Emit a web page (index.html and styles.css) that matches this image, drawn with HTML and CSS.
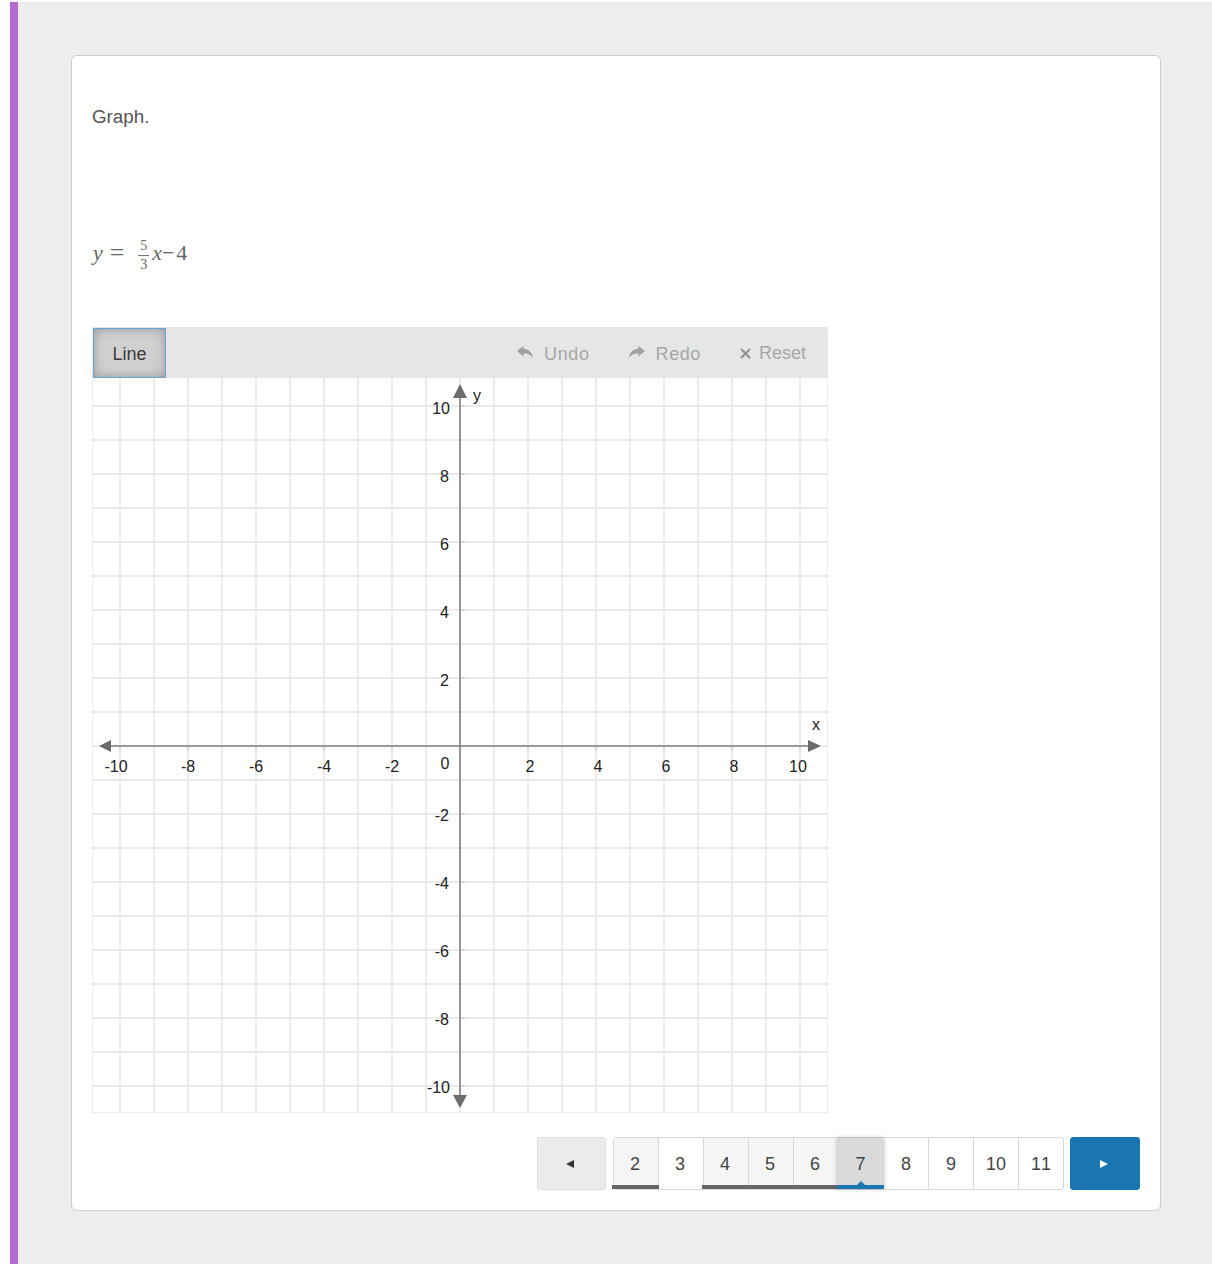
FILE: index.html
```html
<!DOCTYPE html>
<html lang="en">
<head>
<meta charset="utf-8">
<title>Graph</title>
<link rel="stylesheet" href="styles.css">
</head>
<body>
<main class="stage">
  <section class="card">
    <p class="prompt">Graph.</p>
    <div class="math">
      <i>y</i><span class="eq">=</span>
      <span class="frac"><span class="num">5</span><span class="den">3</span></span>
      <i>x</i><span class="minus">−</span><span>4</span>
    </div>
    <div class="graph">
      <div class="toolbar">
        <button class="tool-line">Line</button>
        <div class="actions">
          <span class="action">
            <svg class="arrow" width="16" height="12" viewBox="0 0 16 12"><path d="M6.5 0 0 5 6.5 10.5V7.5C10 7 13 8.5 16 11.5 15 6.5 12 3.2 6.5 2.8Z"/></svg>
            Undo
          </span>
          <span class="action">
            <svg class="arrow" width="16" height="12" viewBox="0 0 16 12"><path d="M9.5 0 16 5 9.5 10.5V7.5C6 7 3 8.5 0 11.5 1 6.5 4 3.2 9.5 2.8Z"/></svg>
            Redo
          </span>
          <span class="action action-reset">
            <svg class="cross" width="11" height="11" viewBox="0 0 11 11"><path d="M1 1 10 10M10 1 1 10"/></svg>
            Reset
          </span>
        </div>
      </div>
      <svg class="plot" width="736" height="735" viewBox="0 0 736 735">
        <path class="grid" d="M28 0V735M62 0V735M96 0V735M130 0V735M164 0V735M198 0V735M232 0V735M266 0V735M300 0V735M334 0V735M368 0V735M402 0V735M436 0V735M470 0V735M504 0V735M538 0V735M572 0V735M606 0V735M640 0V735M674 0V735M708 0V735"/>
        <path class="grid" d="M0 28H736M0 62H736M0 96H736M0 130H736M0 164H736M0 198H736M0 232H736M0 266H736M0 300H736M0 334H736M0 368H736M0 402H736M0 436H736M0 470H736M0 504H736M0 538H736M0 572H736M0 606H736M0 640H736M0 674H736M0 708H736"/>
        <path class="edge" d="M0.5 0V734.5H735.5V0"/>
        <path class="tick" d="M28 368v5M96 368v5M164 368v5M232 368v5M300 368v5M436 368v5M504 368v5M572 368v5M640 368v5M708 368v5M368 28h5M368 96h5M368 164h5M368 232h5M368 300h5M368 436h5M368 504h5M368 572h5M368 640h5M368 708h5"/>
        <path class="axis" d="M16 368H718M368 16V720"/>
        <path class="head" d="M7 368 19 362V374ZM729 368 716 362V374ZM368 6 361 20H375ZM368 730 361 717H375Z"/>
        <g class="labels">
          <text x="24" y="393.5" text-anchor="middle">-10</text>
          <text x="96" y="393.5" text-anchor="middle">-8</text>
          <text x="164" y="393.5" text-anchor="middle">-6</text>
          <text x="232" y="393.5" text-anchor="middle">-4</text>
          <text x="300" y="393.5" text-anchor="middle">-2</text>
          <text x="353" y="390.5" text-anchor="middle">0</text>
          <text x="438" y="393.5" text-anchor="middle">2</text>
          <text x="506" y="393.5" text-anchor="middle">4</text>
          <text x="574" y="393.5" text-anchor="middle">6</text>
          <text x="642" y="393.5" text-anchor="middle">8</text>
          <text x="706" y="393.5" text-anchor="middle">10</text>
          <text x="358" y="35.5" text-anchor="end">10</text>
          <text x="357" y="103.5" text-anchor="end">8</text>
          <text x="357" y="171.5" text-anchor="end">6</text>
          <text x="357" y="239.5" text-anchor="end">4</text>
          <text x="357" y="307.5" text-anchor="end">2</text>
          <text x="357" y="442.5" text-anchor="end">-2</text>
          <text x="357" y="510.5" text-anchor="end">-4</text>
          <text x="357" y="578.5" text-anchor="end">-6</text>
          <text x="357" y="646.5" text-anchor="end">-8</text>
          <text x="358" y="714.5" text-anchor="end">-10</text>
          <text x="385" y="22.5" text-anchor="middle">y</text>
          <text x="724" y="352" text-anchor="middle">x</text>
        </g>
      </svg>
    </div>
    <nav class="pager">
      <button class="nav nav-prev"><svg width="8" height="8" viewBox="0 0 8 8"><path d="M0 4 8 0V8Z"/></svg></button>
      <div class="pages">
        <span class="page seen done">2</span>
        <span class="page">3</span>
        <span class="page seen done">4</span>
        <span class="page seen done">5</span>
        <span class="page seen done">6</span>
        <span class="page current">7</span>
        <span class="page">8</span>
        <span class="page">9</span>
        <span class="page">10</span>
        <span class="page">11</span>
      </div>
      <button class="nav nav-next"><svg width="8" height="8" viewBox="0 0 8 8"><path d="M8 4 0 0V8Z"/></svg></button>
    </nav>
  </section>
</main>
</body>
</html>
```
FILE: styles.css
```css
* { box-sizing: border-box; }
html, body { margin: 0; background: #fff; }
body {
  height: 1280px;
  padding: 2px 0 0 10px;
  font-family: "Liberation Sans", Arial, sans-serif;
  color: #555;
}
.stage {
  height: 1262px;
  background: #ededed;
  border-left: 8px solid #b56bcd;
  padding: 53px 51px 0 53px;
}
.card {
  height: 1156px;
  background: #fff;
  border: 1px solid #ccc;
  border-radius: 6px;
  padding: 50px 20px 0;
}
.prompt {
  margin: 0;
  height: 21px;
  font-size: 18.8px;
  line-height: 21px;
}
.math {
  display: flex;
  align-items: center;
  margin-top: 98px;
  height: 56px;
  padding-left: 1px;
  font-family: "Liberation Serif", "Times New Roman", serif;
  font-size: 22px;
  color: #666;
}
.math i { font-style: italic; }
.eq { margin: 0 13.7px 0 7px; font-size: 26px; }
.frac {
  display: flex;
  flex-direction: column;
  align-items: center;
  width: 11px;
  margin: 3px 3px 0 0;
  font-size: 14px;
  line-height: 15px;
}
.num { border-bottom: 1px solid #777; width: 100%; padding-bottom: 2px; text-align: center; }
.den { padding-top: 1px; }
.minus { margin: 0 2px 0 0; }

.graph {
  width: 736px;
  margin-top: 46px;
}
.toolbar {
  display: flex;
  justify-content: space-between;
  align-items: stretch;
  height: 51px;
  background: #e6e6e6;
  border-radius: 3px 3px 0 0;
  padding: 1px 22px 0 1px;
}
.tool-line {
  width: 73px;
  height: 50px;
  padding: 2px 0 0;
  font: 18px "Liberation Sans", Arial, sans-serif;
  color: #3a3a3a;
  background: #d0d0d0;
  border: 0;
  box-shadow: inset 0 0 0 1px #6aa5da, inset 0 0 12px #8c8c8c;
}
.actions {
  display: flex;
  align-items: center;
  gap: 39px;
}
.action {
  display: flex;
  align-items: center;
  gap: 11px;
  margin-top: 2px;
  font-size: 18px;
  letter-spacing: 0.6px;
  color: #a6a6a6;
}
.action-reset { gap: 8px; margin-top: 0; letter-spacing: 0; }
.arrow { margin-top: -4px; fill: #a0a0a0; }
.cross { fill: none; stroke: #8f8f8f; stroke-width: 2; }

.plot { display: block; }
.grid { fill: none; stroke: #e4e4e4; stroke-width: 1.4; }
.edge { fill: none; stroke: #ececec; stroke-width: 1; }
.tick { fill: none; stroke: #cfcfcf; stroke-width: 1.5; }
.axis { fill: none; stroke: #808080; stroke-width: 1.6; }
.head { fill: #6b6b6b; }
.labels text { font-size: 16px; fill: #222; }

.pager {
  display: flex;
  justify-content: flex-end;
  margin-top: 24px;
  height: 53px;
}
.nav {
  height: 53px;
  padding: 0 3px 0 0;
  border-radius: 3px;
  display: flex;
  align-items: center;
  justify-content: center;
}
.nav-prev { width: 69px; background: #ebebeb; border: 1px solid #ddd; fill: #333; }
.nav-next { width: 70px; background: #1a75b1; border: 1px solid #1a75b1; fill: #fff; }
.pages {
  display: flex;
  height: 53px;
  margin: 0 6px 0 7px;
  border: 1px solid #d8d8d8;
  border-radius: 3px;
  background: #fff;
}
.page {
  position: relative;
  width: 45px;
  display: flex;
  align-items: center;
  justify-content: center;
  padding: 2px 2px 0 0;
  font-size: 18px;
  font-kerning: none;
  color: #444;
  border-right: 1px solid #d8d8d8;
}
.current ~ .page { padding-right: 0; }
.page:last-child { border-right: 0; width: 44px; }
.seen { background: #f5f5f5; }
.done::after {
  content: "";
  position: absolute;
  left: -2px;
  right: -1px;
  bottom: 0;
  height: 4px;
  background: #666;
}
.current {
  width: 47px;
  margin-left: -2px;
  padding-right: 0;
  background: #d9d9d9;
  border-right: 0;
  box-shadow: 0 0 4px rgba(0, 0, 0, .25);
  z-index: 1;
}
.current::after {
  content: "";
  position: absolute;
  left: 0;
  right: 0;
  bottom: 0;
  height: 4px;
  background: #1a75b1;
}
.current::before {
  content: "";
  position: absolute;
  left: 50%;
  bottom: 4px;
  margin-left: -4px;
  border: 4px solid transparent;
  border-top: 0;
  border-bottom-color: #1a75b1;
}
```
